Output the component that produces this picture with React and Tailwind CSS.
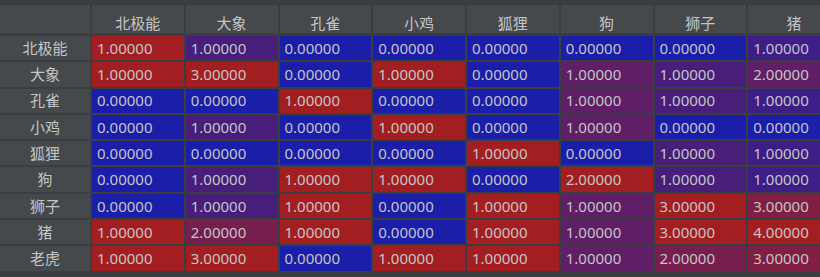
import { Fragment } from "react";

const columns = ["北极能", "大象", "孔雀", "小鸡", "狐狸", "狗", "狮子", "猪"];

const rows = [
  ["北极能", [1, 1, 0, 0, 0, 0, 0, 1]],
  ["大象", [1, 3, 0, 1, 0, 1, 1, 2]],
  ["孔雀", [0, 0, 1, 0, 0, 1, 1, 1]],
  ["小鸡", [0, 1, 0, 1, 0, 1, 0, 0]],
  ["狐狸", [0, 0, 0, 0, 1, 0, 1, 1]],
  ["狗", [0, 1, 1, 1, 0, 2, 1, 1]],
  ["狮子", [0, 1, 1, 0, 1, 1, 3, 3]],
  ["猪", [1, 2, 1, 0, 1, 1, 3, 4]],
  ["老虎", [1, 3, 0, 1, 1, 1, 2, 3]],
];

const BLUE = [27, 30, 168];
const RED = [163, 30, 33];

// per-column heat colour, min -> blue, max -> red
function cellColor(col, v) {
  const vals = rows.map((r) => r[1][col]);
  const min = Math.min(...vals);
  const max = Math.max(...vals);
  const t = max === min ? 0 : (v - min) / (max - min);
  const c = BLUE.map((b, i) => Math.round(b + (RED[i] - b) * t));
  return `rgb(${c[0]}, ${c[1]}, ${c[2]})`;
}

export default function App() {
  return (
    <div
      className="h-[277px] w-[820px] overflow-hidden bg-[#3b3e40] pt-[5px] text-[15px] text-[#c3c5c7]"
      style={{ fontFamily: '"Noto Sans", "Noto Sans CJK SC", sans-serif' }}
    >
      <div className="grid w-max grid-cols-[90px_repeat(8,91.75px)] gap-x-[2px]">
        <div className="h-[28px] bg-[#46494b]" />
        {columns.map((c) => (
          <div
            key={c}
            className="flex h-[28px] items-end justify-center bg-[#46494b] leading-[20px]"
          >
            {c}
          </div>
        ))}
      </div>
      <div className="mt-[3px] grid w-max grid-cols-[90px_repeat(8,91.75px)] gap-[2px]">
        {rows.map(([name, vals]) => (
          <Fragment key={name}>
            <div className="flex h-[24.3px] items-center justify-center bg-[#46494b]">
              {name}
            </div>
            {vals.map((v, i) => (
              <div
                key={i}
                className="flex h-[24.3px] items-center pl-[5px]"
                style={{ backgroundColor: cellColor(i, v) }}
              >
                {v.toFixed(5)}
              </div>
            ))}
          </Fragment>
        ))}
      </div>
    </div>
  );
}
